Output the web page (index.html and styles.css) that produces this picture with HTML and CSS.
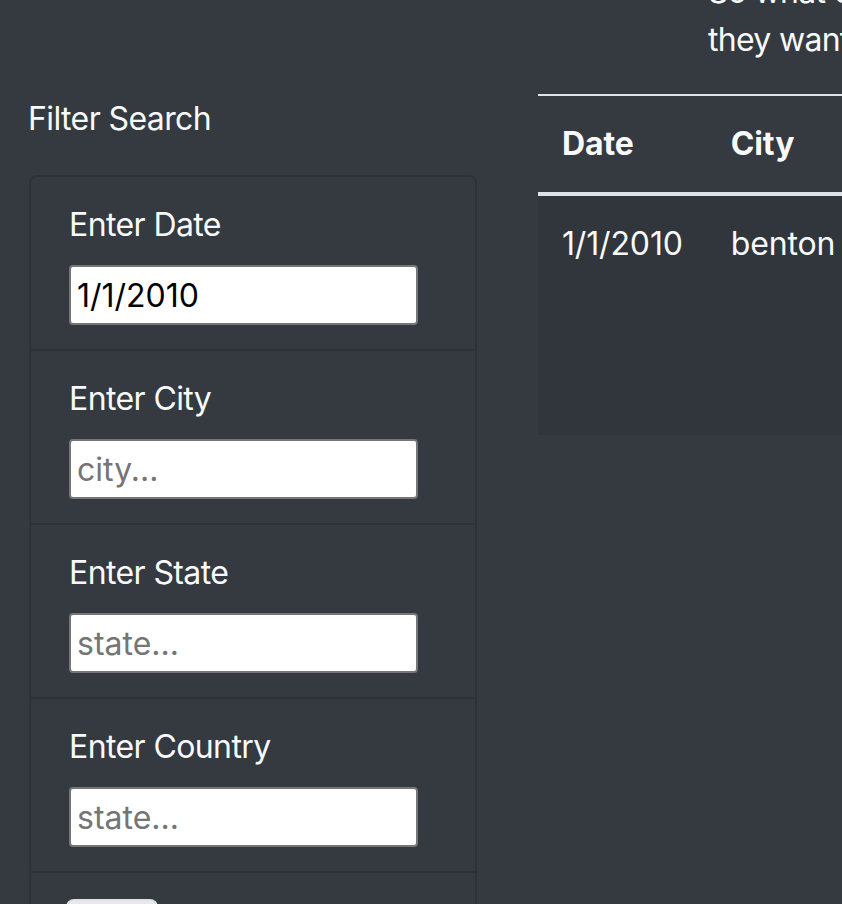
FILE: index.html
```html
<!DOCTYPE html>
<html lang="en">
<head>
<meta charset="utf-8">
<title>UFO Sightings</title>
<link rel="stylesheet" href="styles.css">
</head>
<body>
<div class="page">
  <aside class="sidebar">
    <h3 class="filter-title">Filter Search</h3>
    <form class="card">
      <ul class="list">
        <li class="item">
          <label class="field-label" for="datetime">Enter Date</label>
          <input class="field" id="datetime" type="text" value="1/1/2010">
        </li>
        <li class="item">
          <label class="field-label" for="city">Enter City</label>
          <input class="field" id="city" type="text" placeholder="city...">
        </li>
        <li class="item">
          <label class="field-label" for="state">Enter State</label>
          <input class="field" id="state" type="text" placeholder="state...">
        </li>
        <li class="item">
          <label class="field-label" for="country">Enter Country</label>
          <input class="field" id="country" type="text" placeholder="state...">
        </li>
        <li class="item btn-item">
          <button class="filter-btn" type="button">Filter Table</button>
        </li>
      </ul>
    </form>
  </aside>
  <main class="content">
    <p class="intro">So what can we learn<br>they want from us.</p>
    <table class="table">
      <thead>
        <tr>
          <th>Date</th>
          <th>City</th>
          <th>State</th>
          <th>Country</th>
          <th>Shape</th>
          <th>Duration</th>
          <th>Comments</th>
        </tr>
      </thead>
      <tbody>
        <tr>
          <td>1/1/2010</td>
          <td>benton</td>
          <td>ar</td>
          <td>us</td>
          <td>circle</td>
          <td>5&nbsp;mins.</td>
          <td>lights in the sky</td>
        </tr>
        <tr class="filler"><td colspan="7"></td></tr>
      </tbody>
    </table>
  </main>
</div>
</body>
</html>
```

FILE: styles.css
```css
html, body {
  margin: 0;
  padding: 0;
  background: #343a40;
}

body {
  font-family: Inter, "Noto Sans", "Liberation Sans", sans-serif;
  color: #f8f9fa;
  font-size: 32px;
  line-height: 48px;
  overflow: hidden;
  height: 904px;
}

.page {
  display: grid;
  grid-template-columns: 507px 1fr;
  width: 842px;
  overflow: hidden;
}

.sidebar {
  padding: 95px 30px 0 30px;
}

.filter-title {
  margin: 0 0 32px -2px;
  font-size: 32px;
  font-weight: 400;
  line-height: 48px;
  letter-spacing: -0.6px;
}

.card {
  border: 2px solid rgba(0, 0, 0, 0.13);
  border-radius: 8px;
  margin: 0 0 0 -1px;
}

.list {
  list-style: none;
  margin: 0;
  padding: 0;
}

.item {
  padding: 24px 38px;
  border-bottom: 2px solid rgba(0, 0, 0, 0.13);
}

.field-label {
  display: block;
  margin-bottom: 16px;
  font-size: 32px;
  line-height: 48px;
  letter-spacing: -0.6px;
}

.field {
  box-sizing: border-box;
  display: block;
  width: 349px;
  height: 60px;
  padding: 0 6px;
  border: 2px solid #767676;
  border-radius: 4px;
  background: #fff;
  color: #000;
  font-family: Inter, "Noto Sans", "Liberation Sans", sans-serif;
  font-size: 32px;
}

.field::placeholder {
  color: #757575;
}

.btn-item {
  padding: 26px 38px 24px 35px;
  border-bottom: none;
}

.filter-btn {
  width: 92px;
  height: 60px;
  border: 2px solid #e2e2e2;
  border-radius: 8px;
  background: #e9e9ed;
  color: #000;
  font-size: 26px;
  font-family: Inter, "Noto Sans", "Liberation Sans", sans-serif;
  overflow: hidden;
  white-space: nowrap;
}

.content {
  padding: 0 0 0 31px;
  min-width: 0;
}

.intro {
  margin: -32px 0 0 170px;
  white-space: nowrap;
  font-size: 32px;
  line-height: 48px;
  letter-spacing: -0.7px;
}

.table {
  margin-top: 30px;
  border-collapse: collapse;
  white-space: nowrap;
}

.table th,
.table td {
  padding: 24px;
  text-align: left;
  vertical-align: top;
  font-size: 32px;
  line-height: 48px;
  letter-spacing: -0.15px;
}

.table th {
  font-weight: 700;
  border-top: 2px solid #dee2e6;
  border-bottom: 4px solid #dee2e6;
}

.table tbody {
  background: #31363c;
}

.table .filler td {
  height: 143px;
  padding: 0;
}
```
